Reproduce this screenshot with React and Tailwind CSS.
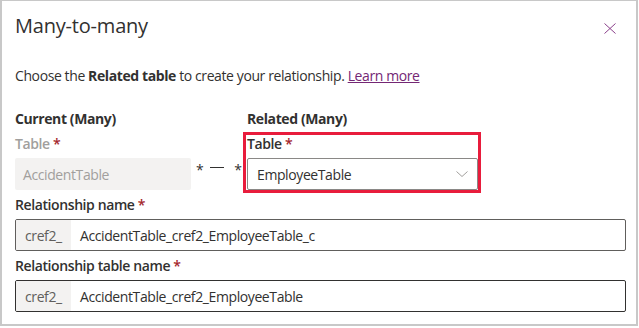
const font = { fontFamily: '"Open Sans", "Noto Sans", sans-serif' };

function Label({ children, disabled }) {
  return (
    <div className={`pt-[5px] pb-[4px] text-[14px] leading-[20px] font-semibold ${disabled ? 'text-[#a19f9d]' : 'text-[#323130]'}`}>
      {children} <span className="text-[#a4262c]">*</span>
    </div>
  );
}

function PrefixInput({ value, dark }) {
  return (
    <div className={`flex h-[32px] w-[611px] rounded-[2px] border overflow-hidden ${dark ? 'border-[#323130]' : 'border-[#605e5c]'}`}>
      <div className="flex items-center w-[55px] bg-[#f3f2f1] pl-[9px] text-[#605e5c] text-[14px]">cref2_</div>
      <div className="flex items-center pl-[9px] text-[#323130] text-[14px]">{value}</div>
    </div>
  );
}

export default function App() {
  return (
    <div className="w-[639px] h-[328px] bg-white tracking-[-0.4px]" style={font}>
      <div className="w-[638px] h-[326px] border-t border-l-2 border-r-2 border-b-2 border-[#c8c8c8] pl-[13px]">
        {/* Header */}
        <div className="flex items-start justify-between pt-[11px]">
          <h1 className="text-[20px] leading-[28px] font-medium text-[#323130] tracking-[-0.2px]">Many-to-many</h1>
          <button className="mt-[11px] mr-[20px] text-[#8a3f8a]">
            <svg width="12" height="11" viewBox="0 0 12 11" fill="none" stroke="currentColor" strokeWidth="1">
              <path d="M0.5 0.5 L11.5 10.5 M11.5 0.5 L0.5 10.5" />
            </svg>
          </button>
        </div>

        <p className="mt-[26px] text-[14px] leading-[20px] text-[#323130]">
          Choose the <b className="font-bold">Related table</b> to create your relationship.{' '}
          <a className="text-[#742774] underline">Learn more</a>
        </p>

        {/* Tables */}
        <div className="flex mt-[23px]">
          <div className="w-[176px] shrink-0">
            <div className="text-[14px] leading-[20px] font-bold text-[#323130]">Current (Many)</div>
            <Label disabled>Table</Label>
            <div className="h-[32px] rounded-[2px] bg-[#f3f2f1] flex items-center pl-[8px] text-[14px] text-[#a19f9d]">
              AccidentTable
            </div>
          </div>

          {/* cardinality marker */}
          <div className="w-[56px] shrink-0 flex flex-col justify-end">
            <div className="h-[32px] flex items-start pl-[5px] text-[#323130] text-[14px]">
              <span className="block shrink-0 leading-[20px] mt-[2px]">*</span>
              <span className="block shrink-0 ml-[7px] mr-[10px] mt-[9px] w-[14px] h-px bg-[#323130]" />
              <span className="block shrink-0 leading-[20px] mt-[2px]">*</span>
            </div>
          </div>

          <div className="w-[231px] shrink-0 relative">
            <div className="text-[14px] leading-[20px] font-bold text-[#323130]">Related (Many)</div>
            <Label>Table</Label>
            <div className="h-[32px] rounded-[2px] border border-[#8a8886] flex items-center justify-between pl-[9px] pr-[9px] text-[14px] text-[#323130]">
              <span>EmployeeTable</span>
              <svg width="12" height="6" viewBox="0 0 12 6" fill="none" stroke="#a19f9d" strokeWidth="1">
                <path d="M0.5 0.5 L6 5.5 L11.5 0.5" />
              </svg>
            </div>
            <div className="absolute left-[-4px] top-[23px] w-[238px] h-[61px] border-[3px] border-[#e81c3c]" />
          </div>
        </div>

        <Label>Relationship name</Label>
        <PrefixInput value="AccidentTable_cref2_EmployeeTable_c" />

        <Label>Relationship table name</Label>
        <PrefixInput value="AccidentTable_cref2_EmployeeTable" dark />
      </div>
    </div>
  );
}
